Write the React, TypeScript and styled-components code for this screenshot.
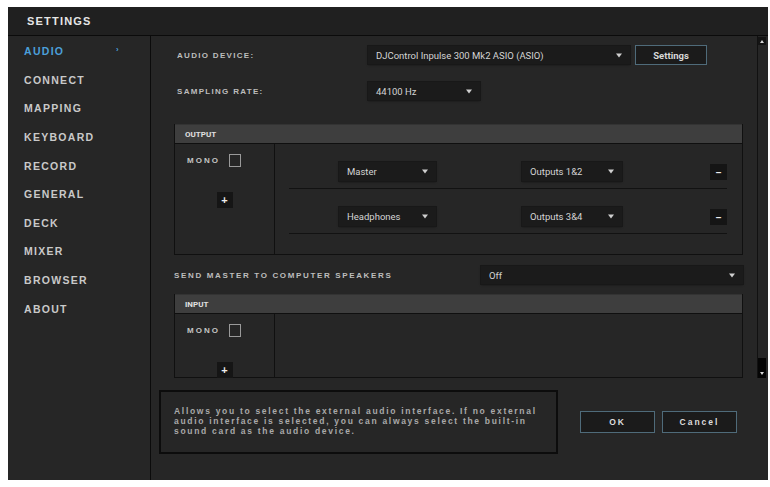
import { FC } from "react";
import styled, { createGlobalStyle } from "styled-components";

const GlobalStyle = createGlobalStyle`
  html, body {
    margin: 0;
    padding: 0;
    background: #ffffff;
  }
  * {
    box-sizing: border-box;
  }
`;

const menu = [
  "AUDIO",
  "CONNECT",
  "MAPPING",
  "KEYBOARD",
  "RECORD",
  "GENERAL",
  "DECK",
  "MIXER",
  "BROWSER",
  "ABOUT",
];

const Arrow: FC = () => (
  <svg width="6" height="5" viewBox="0 0 6 5">
    <path d="M0 0.5 H6 L3 4.5 Z" fill="#cfcfcf" />
  </svg>
);

type SelectProps = { w: number; h?: number; label: string };

const Select: FC<SelectProps> = ({ w, h = 19, label }) => (
  <SelectBox $w={w} $h={h}>
    <span>{label}</span>
    <Arrow />
  </SelectBox>
);

const App: FC = () => {
  return (
    <>
      <GlobalStyle />
      <Window>
        <TitleBar>
          <Title>SETTINGS</Title>
        </TitleBar>
        <Body>
          <Sidebar>
            {menu.map((m, i) => (
              <MenuItem key={m} $active={i === 0}>
                {m}
                {i === 0 && <Caret>›</Caret>}
              </MenuItem>
            ))}
          </Sidebar>
          <Main>
            <ScrollArea>
              <Content>
                <FieldRow $top={0} $h={20}>
                  <Label>AUDIO DEVICE:</Label>
                  <Select w={262} h={18} label="DJControl Inpulse 300 Mk2 ASIO (ASIO)" />
                  <ActionButton>Settings</ActionButton>
                </FieldRow>
                <FieldRow $top={17} $h={18}>
                  <Label>SAMPLING RATE:</Label>
                  <Select w={112} h={18} label="44100 Hz" />
                </FieldRow>

                <Panel $top={24}>
                  <PanelHeader>OUTPUT</PanelHeader>
                  <PanelBody $h={110}>
                    <MonoColumn>
                      <MonoRow>
                        <MonoLabel>MONO</MonoLabel>
                        <CheckBox />
                      </MonoRow>
                      <SquareButton $top={25}>+</SquareButton>
                    </MonoColumn>
                    <Routes>
                      <RouteRow>
                        <Select w={97} label="Master" />
                        <Select w={100} label="Outputs 1&2" />
                        <MinusButton>–</MinusButton>
                      </RouteRow>
                      <RouteRow>
                        <Select w={97} label="Headphones" />
                        <Select w={100} label="Outputs 3&4" />
                        <MinusButton>–</MinusButton>
                      </RouteRow>
                    </Routes>
                  </PanelBody>
                </Panel>

                <SpeakerRow>
                  <SpeakerLabel>SEND MASTER TO COMPUTER SPEAKERS</SpeakerLabel>
                  <Select w={262} h={18} label="Off" />
                </SpeakerRow>

                <Panel $top={10}>
                  <PanelHeader>INPUT</PanelHeader>
                  <PanelBody $h={63}>
                    <MonoColumn>
                      <MonoRow>
                        <MonoLabel>MONO</MonoLabel>
                        <CheckBox />
                      </MonoRow>
                      <SquareButton $top={0} $push>
                        +
                      </SquareButton>
                    </MonoColumn>
                    <Routes />
                  </PanelBody>
                </Panel>
              </Content>
              <ScrollBar>
                <ScrollUp>
                  <svg width="4" height="3" viewBox="0 0 4 3">
                    <path d="M0 3 L2 0 L4 3 Z" fill="#d8d8d8" />
                  </svg>
                </ScrollUp>
                <Thumb>
                  <svg width="4" height="3" viewBox="0 0 4 3">
                    <path d="M0 0 H4 L2 3 Z" fill="#d8d8d8" />
                  </svg>
                </Thumb>
              </ScrollBar>
            </ScrollArea>

            <Footer>
              <HelpBox>
                Allows you to select the external audio interface. If no external
                <br />
                audio interface is selected, you can always select the built-in
                <br />
                sound card as the audio device.
              </HelpBox>
              <FooterButton>OK</FooterButton>
              <FooterButton>Cancel</FooterButton>
            </Footer>
          </Main>
        </Body>
      </Window>
    </>
  );
};

export default App;

const Window = styled.div`
  width: 760px;
  height: 473px;
  margin: 7px 0 0 8px;
  background: #262626;
  display: flex;
  flex-direction: column;
  font-family: "Liberation Sans", Arial, sans-serif;
`;

const TitleBar = styled.div`
  height: 29px;
  background: #202020;
  border-bottom: 1px solid #0b0b0b;
  display: flex;
  align-items: center;
  padding-left: 19px;
`;

const Title = styled.h1`
  margin: 0;
  font-size: 11px;
  font-weight: 700;
  letter-spacing: 1.2px;
  color: #e6e6e6;
`;

const Body = styled.div`
  flex: 1;
  display: flex;
  min-height: 0;
`;

const Sidebar = styled.nav`
  width: 143px;
  background: #262626;
  border-right: 1px solid #0b0b0b;
  padding-top: 1px;
  display: flex;
  flex-direction: column;
`;

const MenuItem = styled.div<{ $active?: boolean }>`
  height: 28.6px;
  display: flex;
  align-items: center;
  padding-left: 16px;
  font-size: 10.5px;
  font-weight: 700;
  letter-spacing: 1.3px;
  color: ${(p) => (p.$active ? "#4b9fda" : "#c9c9c9")};
  position: relative;
`;

const Caret = styled.span`
  position: absolute;
  left: 108px;
  top: 8px;
  font-size: 8px;
  color: #4b9fda;
`;

const Main = styled.main`
  flex: 1;
  display: flex;
  flex-direction: column;
  background: #262626;
`;

const ScrollArea = styled.div`
  height: 342px;
  display: flex;
  overflow: hidden;
`;

const Content = styled.div`
  width: 606px;
  padding: 9px 14px 0 23px;
  display: flex;
  flex-direction: column;
`;

const FieldRow = styled.div<{ $top: number; $h: number }>`
  display: flex;
  align-items: center;
  height: ${(p) => p.$h}px;
  margin-top: ${(p) => p.$top}px;
`;

const Label = styled.div`
  width: 194px;
  padding-left: 3px;
  font-size: 8px;
  font-weight: 700;
  letter-spacing: 1.3px;
  color: #bdbdbd;
`;

const SelectBox = styled.div<{ $w: number; $h: number }>`
  width: ${(p) => p.$w}px;
  height: ${(p) => p.$h}px;
  background: #1b1b1b;
  box-shadow: 0 0 0 1px #181818, 0 1px 2px rgba(0, 0, 0, 0.5);
  display: flex;
  align-items: center;
  justify-content: space-between;
  padding: 0 8px 0 8px;
  font-family: Roboto, "Liberation Sans", sans-serif;
  font-size: 9.5px;
  color: #d4d4d4;
`;

const ActionButton = styled.button`
  margin-left: 5px;
  width: 72px;
  height: 20px;
  background: #1b1b1b;
  border: 1px solid #4f6b7a;
  color: #d8d8d8;
  font-family: Roboto, "Liberation Sans", sans-serif;
  font-size: 9.5px;
  font-weight: 700;
  padding: 0;
`;

const Panel = styled.section<{ $top: number }>`
  margin-top: ${(p) => p.$top}px;
  border: 1px solid #101010;
  border-top: none;
  display: flex;
  flex-direction: column;
`;

const PanelHeader = styled.div`
  height: 20px;
  background: #3e3e3e;
  border-top: 1px solid #333;
  border-bottom: 1px solid #0f0f0f;
  display: flex;
  align-items: center;
  padding-left: 10px;
  font-family: Roboto, "Liberation Sans", sans-serif;
  font-size: 8px;
  font-weight: 700;
  color: #e0e0e0;
`;

const PanelBody = styled.div<{ $h: number }>`
  height: ${(p) => p.$h}px;
  display: flex;
  background: #262626;
`;

const MonoColumn = styled.div`
  width: 100px;
  border-right: 1px solid #101010;
  display: flex;
  flex-direction: column;
  align-items: center;
`;

const MonoRow = styled.div`
  width: 100%;
  display: flex;
  align-items: center;
  padding: 10px 0 0 12px;
`;

const MonoLabel = styled.span`
  width: 42px;
  font-size: 8px;
  font-weight: 700;
  letter-spacing: 2px;
  color: #c4c4c4;
`;

const CheckBox = styled.span`
  width: 12px;
  height: 13px;
  border: 1px solid #9a9a9a;
`;

const SquareButton = styled.div<{ $top: number; $push?: boolean }>`
  width: 16px;
  height: 16px;
  margin-top: ${(p) => (p.$push ? "auto" : `${p.$top}px`)};
  margin-bottom: ${(p) => (p.$push ? "-1px" : "0")};
  background: #151515;
  color: #eeeeee;
  display: flex;
  align-items: center;
  justify-content: center;
  font-size: 11px;
  font-weight: 700;
`;

const Routes = styled.div`
  flex: 1;
  padding: 0 15px 0 14px;
  display: flex;
  flex-direction: column;
`;

const RouteRow = styled.div`
  height: 45px;
  padding: 18px 0 0 50px;
  border-bottom: 1px solid #121212;
  display: flex;
  align-items: flex-start;
  gap: 86px;
`;

const MinusButton = styled.div`
  margin-left: auto;
  margin-top: 2px;
  width: 17px;
  height: 16px;
  background: #151515;
  color: #eeeeee;
  display: flex;
  align-items: center;
  justify-content: center;
  font-size: 10px;
  font-weight: 700;
`;

const SpeakerRow = styled.div`
  margin-top: 11px;
  height: 18px;
  display: flex;
  align-items: center;
  justify-content: space-between;
`;

const SpeakerLabel = styled.div`
  font-size: 8px;
  font-weight: 700;
  letter-spacing: 1.65px;
  color: #bdbdbd;
`;

const ScrollBar = styled.div`
  width: 9px;
  margin-right: 2px;
  border-left: 1px solid #111111;
  display: flex;
  flex-direction: column;
  justify-content: space-between;
  padding-top: 1px;
`;

const ScrollUp = styled.div`
  width: 8px;
  height: 8px;
  background: #141414;
  display: flex;
  align-items: center;
  justify-content: center;
`;

const Thumb = styled.div`
  width: 8px;
  height: 20px;
  background: #050505;
  display: flex;
  align-items: flex-end;
  justify-content: center;
  padding-bottom: 3px;
`;

const Footer = styled.div`
  flex: 1;
  display: flex;
  align-items: flex-start;
  padding: 12px 0 0 8px;
`;

const HelpBox = styled.div`
  width: 399px;
  height: 64px;
  border: 2px solid #0c0c0c;
  padding: 14px 0 0 13px;
  font-size: 8.5px;
  line-height: 10px;
  font-weight: 700;
  letter-spacing: 1.7px;
  white-space: nowrap;
  color: #a9a9a9;
`;

const FooterButton = styled.button`
  margin: 21px 0 0 7px;
  width: 75px;
  height: 22px;
  background: #1b1b1b;
  border: 1px solid #4f6b7a;
  color: #dddddd;
  font-family: "Liberation Sans", Arial, sans-serif;
  font-size: 8.5px;
  font-weight: 700;
  letter-spacing: 2px;
  padding: 0;

  &:first-of-type {
    margin-left: 22px;
  }
`;
